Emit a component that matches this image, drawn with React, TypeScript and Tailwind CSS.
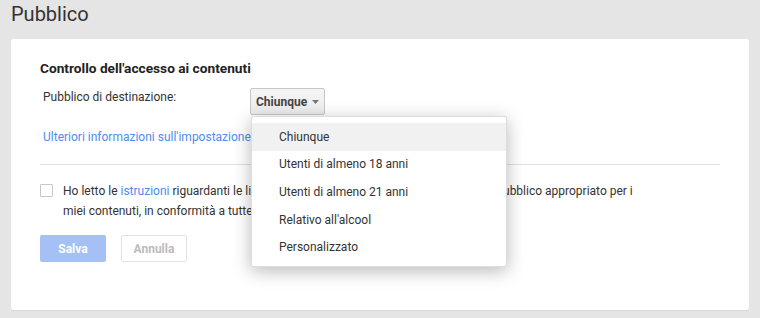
import { useState } from 'react'

const options = [
  'Chiunque',
  'Utenti di almeno 18 anni',
  'Utenti di almeno 21 anni',
  "Relativo all'alcool",
  'Personalizzato',
]

export default function App() {
  const [selected] = useState('Chiunque')
  const [open] = useState(true)

  return (
    <div className="min-h-[318px] bg-[#e5e5e5] px-[11px] pt-[2px] pb-[8px] font-['Roboto',sans-serif] text-[#333]">
      <h1 className="text-[20px] leading-[24px] text-[#333]">Pubblico</h1>

      <div className="mt-[13px] h-[271px] rounded-[3px] bg-white pl-[29px] pr-[29px] pt-[20px] shadow-[0_1px_1px_rgba(0,0,0,0.06)]">
        <h2 className="text-[13.7px] font-bold leading-[18px] text-[#222]">
          Controllo dell&apos;accesso ai contenuti
        </h2>

        <div className="mt-[10px] flex items-start pl-[3px]">
          <span className="w-[207px] pt-[2px] text-[12px] leading-[16px] text-[#333]">
            Pubblico di destinazione:
          </span>
          <div className="relative">
            <button className="mt-[1px] flex h-[27px] items-center gap-[5px] rounded-[2px] border border-[#c6c6c6] bg-gradient-to-b from-[#f5f5f5] to-[#ececec] px-[5px] text-[12px] font-bold text-[#444]">
              {selected}
              <svg width="7" height="4" viewBox="0 0 7 4" className="mt-[1px]">
                <path d="M0 0h7L3.5 4z" fill="#777" />
              </svg>
            </button>
            {open && (
              <div className="absolute left-[1px] top-[29px] z-10 w-[256px] rounded-[2px] border border-[#ddd] bg-white pt-[6px] pb-[5px] shadow-[0_4px_18px_rgba(0,0,0,0.28)]">
                {options.map((o) => (
                  <div
                    key={o}
                    className={
                      'flex h-[27.6px] items-center pl-[27px] text-[12px] text-[#333] ' +
                      (o === selected ? 'bg-[#f1f1f1]' : '')
                    }
                  >
                    {o}
                  </div>
                ))}
              </div>
            )}
          </div>
        </div>

        <a className="mt-[14px] block pl-[3px] text-[12px] leading-[16px] text-[#4d8cf0]">
          Ulteriori informazioni sull&apos;impostazione dell&apos;accesso ai contenuti
        </a>

        <div className="mt-[19px] h-px bg-[#e0e0e0]" />

        <div className="mt-[16px] flex items-start">
          <span className="mt-[3px] h-[13px] w-[13px] shrink-0 rounded-[1px] border border-[#c6c6c6] bg-white" />
          <p className="ml-[10px] w-[592px] text-[12px] leading-[20px] text-[#333]">
            Ho letto le <a className="text-[#4d8cf0]">istruzioni</a> riguardanti le linee guida della
            community e ho selezionato il pubblico appropriato per i miei contenuti, in conformità a
            tutte le norme vigenti.
          </p>
        </div>

        <div className="mt-[14px] flex gap-[15px]">
          <button className="h-[27px] w-[66px] rounded-[2px] bg-[#a4c0f4] text-[12px] font-bold text-white">
            Salva
          </button>
          <button className="h-[27px] w-[66px] rounded-[2px] border border-[#e3e3e3] bg-white text-[12px] font-bold text-[#bbb]">
            Annulla
          </button>
        </div>
      </div>
    </div>
  )
}
